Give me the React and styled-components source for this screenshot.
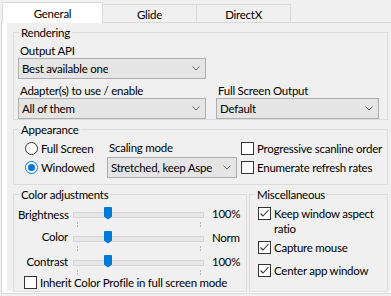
import React from "react";
import styled, { createGlobalStyle } from "styled-components";

const GlobalStyle = createGlobalStyle`
  * { box-sizing: border-box; }
  body {
    margin: 0;
    background: #f0f0f0;
    font-family: Lato, "Liberation Sans", sans-serif;
    font-size: 11.5px;
    letter-spacing: -0.25px;
    color: #000;
    overflow: hidden;
  }
`;

const Window = styled.div`
  width: 391px;
  height: 296px;
  padding-top: 2px;
  overflow: hidden;
`;

const TabStrip = styled.div`
  display: flex;
  align-items: flex-end;
  height: 20px;
  padding-left: 2px;
  position: relative;
  z-index: 1;
`;

const Tab = styled.div`
  display: flex;
  justify-content: center;
  align-items: center;
  width: ${(p) => p.$width}px;
  height: ${(p) => (p.$active ? 21 : 18)}px;
  margin-bottom: ${(p) => (p.$active ? -1 : 0)}px;
  padding-top: ${(p) => (p.$active ? 0 : 1)}px;
  background: ${(p) => (p.$active ? "#fff" : "#f0f0f0")};
  border: 1px solid #d9d9d9;
  border-bottom: none;
  border-left: ${(p) => (p.$first ? "1px solid #d9d9d9" : "none")};
`;

const Panel = styled.div`
  width: 400px;
  height: 272px;
  margin-left: 1px;
  padding: 0 0 2px 5px;
  background: #fff;
  border: 1px solid #d9d9d9;
`;

const Dialog = styled.div`
  height: 100%;
  padding: 2px 0 0 6px;
  background: #f0f0f0;
  display: flex;
  flex-direction: column;
  gap: 2px;
`;

const Group = styled.fieldset`
  margin: 0;
  min-width: 0;
  width: ${(p) => p.$width}px;
  padding: ${(p) => p.$pad};
  border: 1px solid #dcdcdc;
`;

const Legend = styled.legend`
  margin-left: 1px;
  padding: 0 2px;
  line-height: 15px;
`;

const Label = styled.div`
  line-height: 14px;
  padding-left: 2px;
  margin-top: ${(p) => p.$top || 0}px;
  white-space: nowrap;
`;

const SelectBox = styled.div`
  display: flex;
  align-items: center;
  justify-content: space-between;
  width: ${(p) => p.$width}px;
  height: 21px;
  padding: 0 5px 0 3px;
  background: #e5e5e5;
  border: 1px solid #adadad;
  white-space: nowrap;
  overflow: hidden;
`;

const SelectText = styled.span`
  overflow: hidden;
`;

const Row = styled.div`
  display: flex;
  gap: ${(p) => p.$gap || 0}px;
`;

const Column = styled.div`
  display: flex;
  flex-direction: column;
`;

const AppearanceGrid = styled.div`
  display: grid;
  grid-template-columns: 85px 130px auto;
  grid-template-rows: 14px 21px;
  column-gap: 4px;
  row-gap: 2px;
  align-items: center;
`;

const Option = styled.label`
  display: flex;
  align-items: ${(p) => (p.$top ? "flex-start" : "center")};
  gap: 3px;
  padding-left: ${(p) => p.$indent || 0}px;
  margin-top: ${(p) => p.$mt || 0}px;
  line-height: 15px;
  white-space: ${(p) => (p.$wrap ? "normal" : "nowrap")};
`;

const OptionText = styled.span`
  max-width: ${(p) => (p.$max ? `${p.$max}px` : "none")};
`;

const RadioCircle = styled.span`
  flex: none;
  width: 13px;
  height: 13px;
  border-radius: 50%;
  border: 1px solid ${(p) => (p.$checked ? "#0078d7" : "#333")};
  background: #fff;
  display: flex;
  align-items: center;
  justify-content: center;
  &::after {
    content: "";
    display: ${(p) => (p.$checked ? "block" : "none")};
    width: 7px;
    height: 7px;
    border-radius: 50%;
    background: #0078d7;
  }
`;

const CheckSquare = styled.span`
  flex: none;
  width: 13px;
  height: 13px;
  margin-top: ${(p) => p.$mt || 0}px;
  border: 1px solid #333;
  background: #fff;
  display: flex;
  align-items: center;
  justify-content: center;
`;

const BottomRow = styled.div`
  display: flex;
  gap: 2px;
`;

const SliderRow = styled.div`
  display: grid;
  grid-template-columns: 50px 131px auto;
  column-gap: 5px;
  height: 24px;
  align-items: center;
`;

const SliderLabel = styled.span`
  text-align: right;
  white-space: nowrap;
  margin-top: ${(p) => p.$mt || 0}px;
`;

const SliderValue = styled.span`
  padding-left: 3px;
  margin-top: -2px;
  white-space: nowrap;
`;

const Track = styled.div`
  position: relative;
  height: 24px;
  &::before {
    content: "";
    position: absolute;
    left: 0;
    right: 0;
    top: 10px;
    height: 4px;
    background: #e7e7e7;
    border: 1px solid #d6d6d6;
  }
`;

const Thumb = styled.svg`
  position: absolute;
  left: 31px;
  top: 5px;
`;

const Tick = styled.span`
  position: absolute;
  top: 20px;
  left: ${(p) => p.$x}px;
  width: 1px;
  height: 5px;
  background: repeating-linear-gradient(#b4b4b4 0 2px, transparent 2px 3px);
`;

const Chevron = () => (
  <svg width="8" height="5" viewBox="0 0 8 5">
    <path d="M0.5 0.5 L4 4 L7.5 0.5" fill="none" stroke="#606060" strokeWidth="1" />
  </svg>
);

const Select = ({ width, children }) => (
  <SelectBox $width={width}>
    <SelectText>{children}</SelectText>
    <Chevron />
  </SelectBox>
);

const Radio = ({ checked, children, indent }) => (
  <Option $indent={indent}>
    <RadioCircle $checked={checked} />
    <span>{children}</span>
  </Option>
);

const Checkbox = ({ checked, children, indent, mt, max }) => (
  <Option $indent={indent} $mt={mt} $top={!!max} $wrap={!!max}>
    <CheckSquare $mt={max ? 1 : 0}>
      {checked && (
        <svg width="11" height="11" viewBox="0 0 11 11">
          <path d="M1.5 5.5 L4 8 L9.5 2" fill="none" stroke="#333" strokeWidth="1.1" />
        </svg>
      )}
    </CheckSquare>
    <OptionText $max={max}>{children}</OptionText>
  </Option>
);

const Slider = ({ label, value, mt }) => (
  <SliderRow>
    <SliderLabel $mt={mt}>{label}</SliderLabel>
    <Track>
      <Thumb width="8" height="13" viewBox="0 0 8 13">
        <path d="M1 0 H7 Q8 0 8 1 V9.5 L4 12.5 L0 9.5 V1 Q0 0 1 0 Z" fill="#0078d7" />
      </Thumb>
      <Tick $x={4} />
      <Tick $x={127} />
    </Track>
    <SliderValue>{value}</SliderValue>
  </SliderRow>
);

export default function App() {
  return (
    <Window>
      <GlobalStyle />
      <TabStrip>
        <Tab $active $first $width={101}>General</Tab>
        <Tab $width={94}>Glide</Tab>
        <Tab $width={94}>DirectX</Tab>
      </TabStrip>
      <Panel>
        <Dialog>
          <Group $width={375} $pad="3px 4px 0 4px">
            <Legend>Rendering</Legend>
            <Label $top={1}>Output API</Label>
            <Select width={188}>Best available one</Select>
            <Row $gap={10}>
              <Column>
                <Label $top={5}>Adapter(s) to use / enable</Label>
                <Select width={188}>All of them</Select>
              </Column>
              <Column>
                <Label $top={5}>Full Screen Output</Label>
                <Select width={163}>Default</Select>
              </Column>
            </Row>
          </Group>

          <Group $width={375} $pad="4px 4px 6px 4px">
            <Legend>Appearance</Legend>
            <AppearanceGrid>
              <Radio indent={7}>Full Screen</Radio>
              <Label>Scaling mode</Label>
              <Checkbox>Progressive scanline order</Checkbox>
              <Radio indent={7} checked>Windowed</Radio>
              <Select width={130}>Stretched, keep Aspe</Select>
              <Checkbox>Enumerate refresh rates</Checkbox>
            </AppearanceGrid>
          </Group>

          <BottomRow>
            <Group $width={234} $pad="0 4px 1px 4px">
              <Legend>Color adjustments</Legend>
              <Slider label="Brightness" value="100%" />
              <Slider label="Color" value="Norm" mt={-3} />
              <Slider label="Contrast" value="100%" mt={-2} />
              <Checkbox indent={6} mt={1}>Inherit Color Profile in full screen mode</Checkbox>
            </Group>
            <Group $width={139} $pad="4px 4px 0 4px">
              <Legend>Miscellaneous</Legend>
              <Checkbox checked indent={4} max={106}>Keep window aspect ratio</Checkbox>
              <Checkbox checked indent={4} mt={4}>Capture mouse</Checkbox>
              <Checkbox checked indent={4} mt={8}>Center app window</Checkbox>
            </Group>
          </BottomRow>
        </Dialog>
      </Panel>
    </Window>
  );
}
